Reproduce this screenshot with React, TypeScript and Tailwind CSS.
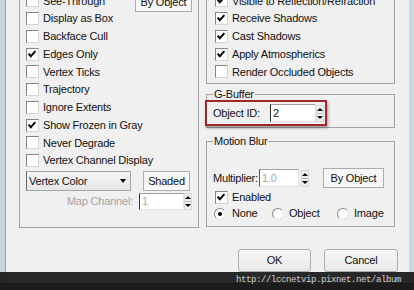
import React from "react";

function Check({ checked }: { checked?: boolean }) {
  return (
    <span className="flex h-[13px] w-[13px] shrink-0 items-center justify-center border border-t-[#858585] border-l-[#858585] border-r-[#d4d4d4] border-b-[#d4d4d4] bg-white">
      {checked && (
        <svg width="11" height="11" viewBox="0 0 11 11">
          <path d="M1.6 4.6 L3.8 7.2 L8.4 2.2" fill="none" stroke="#000" strokeWidth="1.9" />
        </svg>
      )}
    </span>
  );
}

function CheckRow({ label, checked }: { label: string; checked?: boolean }) {
  return (
    <div className="flex h-[17.75px] items-center gap-[4px] whitespace-nowrap">
      <Check checked={checked} />
      <span>{label}</span>
    </div>
  );
}

function Radio({ on }: { on?: boolean }) {
  return (
    <span className="flex h-[12px] w-[12px] shrink-0 items-center justify-center rounded-full border border-t-[#8a8a8a] border-l-[#8a8a8a] border-r-[#e2e2e2] border-b-[#e2e2e2] bg-white">
      {on && <span className="h-[4px] w-[4px] rounded-full bg-black" />}
    </span>
  );
}

function Spin() {
  return (
    <span className="flex h-[17px] w-[8px] shrink-0 flex-col items-center justify-center gap-[2px] border border-[#d8d8d8] bg-[#efefef]">
      <span className="h-0 w-0 border-x-[3px] border-b-[3px] border-x-transparent border-b-black" />
      <span className="h-[1px] w-[6px] bg-[#b8b8b8]" />
      <span className="h-0 w-0 border-x-[3px] border-t-[3px] border-x-transparent border-t-black" />
    </span>
  );
}

export default function App() {
  return (
    <div className="relative h-[290px] w-[414px] overflow-hidden bg-[#161616] font-['Liberation_Sans',Arial,sans-serif] text-[11px] tracking-[-0.2px] text-[#111]">
      <div className="flex h-[284px] border-b border-[#101010]">
        <div className="w-[6px] shrink-0 border-r border-[#9aa2ae] bg-[#cdd4e0]" />

        <div className="flex w-[403px] flex-col bg-[#f0f0f0]">
          <div className="-mt-[10px] flex gap-[7px]">
            {/* left display properties */}
            <div className="ml-[13px] h-[238px] w-[180px] shrink-0 border border-[#a3a3a3] pl-[6px] pt-[1px]">
              <div className="flex h-[17.75px] items-center gap-[4px] whitespace-nowrap">
                <Check />
                <span>See-Through</span>
                <button className="mr-[6px] ml-auto h-[20px] w-[57px] self-start border border-[#adadad] bg-[#f7f7f7] text-[11px]">
                  By Object
                </button>
              </div>
              <CheckRow label="Display as Box" />
              <CheckRow label="Backface Cull" />
              <CheckRow label="Edges Only" checked />
              <CheckRow label="Vertex Ticks" />
              <CheckRow label="Trajectory" />
              <CheckRow label="Ignore Extents" />
              <CheckRow label="Show Frozen in Gray" checked />
              <CheckRow label="Never Degrade" />
              <CheckRow label="Vertex Channel Display" />

              <div className="mt-[1.5px] flex h-[20px] items-center gap-[12px]">
                <div className="flex h-[20px] w-[105px] items-center justify-between border border-[#a5a5a5] border-l-[#6a6a6a] bg-gradient-to-b from-[#f6f6f6] to-[#e6e6e6] pl-[2px] pr-[4px]">
                  <span>Vertex Color</span>
                  <span className="h-0 w-0 border-x-[3.5px] border-t-[4px] border-x-transparent border-t-black" />
                </div>
                <button className="h-[20px] w-[47px] border border-[#adadad] bg-[#f7f7f7]">Shaded</button>
              </div>

              <div className="mt-[2px] flex h-[17px] items-center justify-end gap-[6px] pr-[6px]">
                <span className="text-[#a3a3a3]">Map Channel:</span>
                <div className="flex items-center">
                  <div className="flex h-[17px] w-[45px] items-center border border-t-[#a0a0a0] border-l-[#3a3a3a] border-r-[#e4e4e4] border-b-[#e4e4e4] bg-white pl-[2px] text-[#a8a8a8]">
                    1
                  </div>
                  <Spin />
                </div>
              </div>
            </div>

            {/* right rendering properties */}
            <div className="w-[189px] shrink-0">
              <div className="h-[94px] border border-[#a3a3a3] pl-[8px] pt-[1px]">
                <CheckRow label="Visible to Reflection/Refraction" checked />
                <CheckRow label="Receive Shadows" checked />
                <CheckRow label="Cast Shadows" checked />
                <CheckRow label="Apply Atmospherics" checked />
                <CheckRow label="Render Occluded Objects" />
              </div>

              <fieldset className="mt-[3.5px] border border-[#a3a3a3] px-[6px] pt-[2.5px] pb-[4px]">
                <legend className="px-[1px] leading-[13px]">G-Buffer</legend>
                <div className="relative flex h-[20px] items-center">
                  <span className="w-[57px] shrink-0">Object ID:</span>
                  <div className="flex h-[18px] w-[46px] items-center border border-t-[#a0a0a0] border-l-[#2a2a2a] border-r-[#e4e4e4] border-b-[#e4e4e4] bg-white pl-[2px]">
                    2
                  </div>
                  <Spin />
                  <div className="absolute -left-[8px] -top-[3px] h-[26px] w-[122px] border-2 border-[#a2262c] shadow-[1px_2px_3px_rgba(0,0,0,0.35)]" />
                </div>
              </fieldset>

              <fieldset className="mt-[6.5px] border border-[#a3a3a3] px-[6px] pt-[20.5px] pb-[4px]">
                <legend className="px-[1px] leading-[13px]">Motion Blur</legend>
                <div className="flex h-[20px] items-center">
                  <span className="w-[46px] shrink-0">Multiplier:</span>
                  <div className="flex h-[18px] w-[40px] items-center border border-t-[#a0a0a0] border-l-[#5a5a5a] border-r-[#e4e4e4] border-b-[#e4e4e4] bg-white pl-[2px] text-[#a8a8a8]">
                    1.0
                  </div>
                  <span className="ml-[2px]">
                    <Spin />
                  </span>
                  <button className="ml-[14px] h-[20px] w-[61px] border border-[#adadad] bg-[#f7f7f7]">By Object</button>
                </div>
                <div className="mt-[1px] flex h-[16px] items-center gap-[4px] pl-[2px]">
                  <Check checked />
                  <span>Enabled</span>
                </div>
                <div className="flex h-[17px] items-center pl-[1px]">
                  <div className="flex w-[58px] items-center gap-[6px]">
                    <Radio on />
                    <span>None</span>
                  </div>
                  <div className="flex w-[65px] items-center gap-[5px]">
                    <Radio />
                    <span>Object</span>
                  </div>
                  <div className="flex items-center gap-[5px]">
                    <Radio />
                    <span>Image</span>
                  </div>
                </div>
              </fieldset>
            </div>
          </div>

          <div className="mt-[21px] flex justify-end gap-[13px] pr-[11px]">
            <button className="h-[23px] w-[73px] rounded-[3px] border border-[#acacac] bg-gradient-to-b from-[#f7f7f7] to-[#e8e8e8]">OK</button>
            <button className="h-[23px] w-[74px] rounded-[3px] border border-[#acacac] bg-gradient-to-b from-[#f7f7f7] to-[#e8e8e8]">Cancel</button>
          </div>
        </div>

        <div className="w-[5px] shrink-0 border-l border-[#d8d8d8] bg-[#ced6e3]" />
      </div>

      <div className="absolute bottom-0 left-0 flex h-[18px] w-full items-center justify-end bg-[#1c1c1c]/95 pr-[13px] font-['Liberation_Mono',monospace] text-[9px] tracking-[-0.4px] text-[#cfcfcf]">
        http://lccnetvip.pixnet.net/album
      </div>
    </div>
  );
}
